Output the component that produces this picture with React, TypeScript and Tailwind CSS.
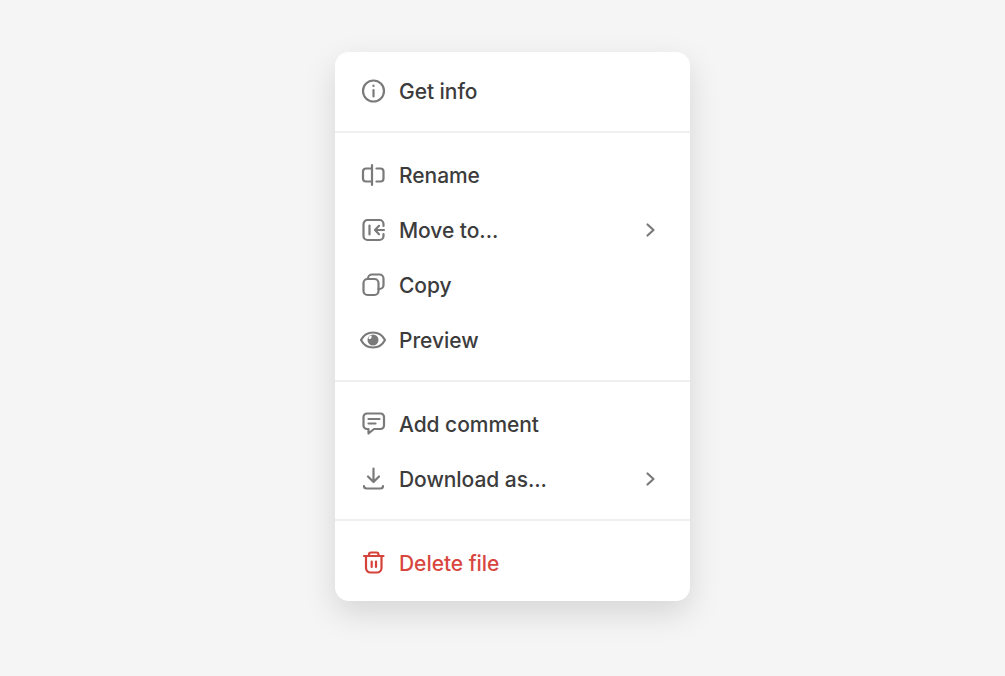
const Icon = ({ children, red }: { children: React.ReactNode; red?: boolean }) => (
  <svg
    width="26"
    height="26"
    viewBox="0 0 26 26"
    fill="none"
    stroke={red ? "#d5423a" : "#7a7a7a"}
    strokeWidth="2.2"
    strokeLinecap="round"
    strokeLinejoin="round"
    className="shrink-0"
  >
    {children}
  </svg>
);

const Chevron = () => (
  <svg width="12" height="16" viewBox="0 0 12 16" fill="none" stroke="#7a7a7a" strokeWidth="2.2" strokeLinecap="round" strokeLinejoin="round" className="shrink-0">
    <path d="M2.500 2.500 L8.500 8 L2.500 13.500" />
  </svg>
);

const Row = ({ icon, label, chevron, red }: { icon: React.ReactNode; label: string; chevron?: boolean; red?: boolean }) => (
  <div className="flex h-[55px] items-center pl-[25px] pr-[33px]">
    <Icon red={red}>{icon}</Icon>
    <span className={`ml-[13px] flex-1 pt-[2px] text-[21px] font-medium leading-none tracking-[-0.05px] ${red ? "text-[#d8473f]" : "text-[#3c3c3c]"}`}>
      {label}
    </span>
    {chevron && <Chevron />}
  </div>
);

export default function App() {
  return (
    <div
      className="flex min-h-[676px] items-start justify-center bg-[#f5f5f5] pt-[52px] pl-[20px]"
      style={{ fontFamily: "Inter, 'Noto Sans', sans-serif" }}
    >
      <div className="w-[355px] rounded-[14px] bg-white shadow-[0_12px_32px_rgba(0,0,0,0.13)]">
        <div className="border-b-2 border-[#f0f0f0] pt-[11px] pb-[13px]">
          <Row
            label="Get info"
            icon={
              <>
                <circle cx="13.500" cy="13" r="10.500" />
                <path d="M13.500 12v6.500M13.500 7.600v.4" />
              </>
            }
          />
        </div>
        <div className="border-b-2 border-[#f0f0f0] pt-[14px] pb-[13px]">
          <Row
            label="Rename"
            icon={
              <>
                <path d="M12 3v20" />
                <path d="M12 6.500H6a3 3 0 0 0-3 3v7a3 3 0 0 0 3 3h6" />
                <path d="M16.500 6.500h4a3 3 0 0 1 3 3v7a3 3 0 0 1-3 3h-4" />
              </>
            }
          />
          <Row
            label="Move to..."
            chevron
            icon={
              <>
                <path d="M23.500 9V7a4 4 0 0 0-4-4H7.500a4 4 0 0 0-4 4v12a4 4 0 0 0 4 4h12a4 4 0 0 0 4-4v-2" />
                <path d="M9.500 8.500v9M24 13h-8.500M19 8.800 15 13l4 4.200" />
              </>
            }
          />
          <Row
            label="Copy"
            icon={
              <>
                <rect x="3.500" y="7" width="15" height="16" rx="4" />
                <path d="M8 7V6.500a4 4 0 0 1 4-4h7.500a4 4 0 0 1 4 4V13a4 4 0 0 1-4 4h-1" />
              </>
            }
          />
          <Row
            label="Preview"
            icon={
              <>
                <path d="M1 13C3.500 8.200 8 5.500 13 5.500s9.500 2.700 12 7.500c-2.500 4.800-7 7.500-12 7.500S3.500 17.800 1 13Z" />
                <circle cx="13" cy="13" r="5.500" fill="#7a7a7a" stroke="none" />
                <path d="M8.500 11.500a3 3 0 0 1 3-3 3 3 0 0 1-1 3.500 3 3 0 0 1-2-.5Z" fill="#fff" stroke="none" />
              </>
            }
          />
        </div>
        <div className="border-b-2 border-[#f0f0f0] pt-[14px] pb-[13px]">
          <Row
            label="Add comment"
            icon={
              <>
                <path d="M7 2.500h13.500a3.500 3.500 0 0 1 3.500 3.500v8.500a3.500 3.500 0 0 1-3.500 3.500h-6.500l-5.500 4.500V18H7a3.500 3.500 0 0 1-3.500-3.500V6a3.500 3.500 0 0 1 3.500-3.500Z" />
                <path d="M8.500 8h11M8.500 12.500h7" />
              </>
            }
          />
          <Row
            label="Download as..."
            chevron
            icon={
              <>
                <path d="M13.500 2.500V15.500M8 10.500 13.500 16l5.500-5.500" />
                <path d="M4 20c0 1.500 1 2.500 2.500 2.500h14c1.500 0 2.500-1 2.500-2.500" />
              </>
            }
          />
        </div>
        <div className="pt-[14px] pb-[11px]">
          <Row
            red
            label="Delete file"
            icon={
              <>
                <path d="M4 6h19.500" />
                <path d="M9 6V4.500a2 2 0 0 1 2-2h5.500a2 2 0 0 1 2 2V6" />
                <path d="M6 6v12a4.500 4.500 0 0 0 4.500 4.500h6.500a4.500 4.500 0 0 0 4.500-4.500V6" />
                <path d="M11.700 11.500v5.500M16 11.500v5.500" />
              </>
            }
          />
        </div>
      </div>
    </div>
  );
}
